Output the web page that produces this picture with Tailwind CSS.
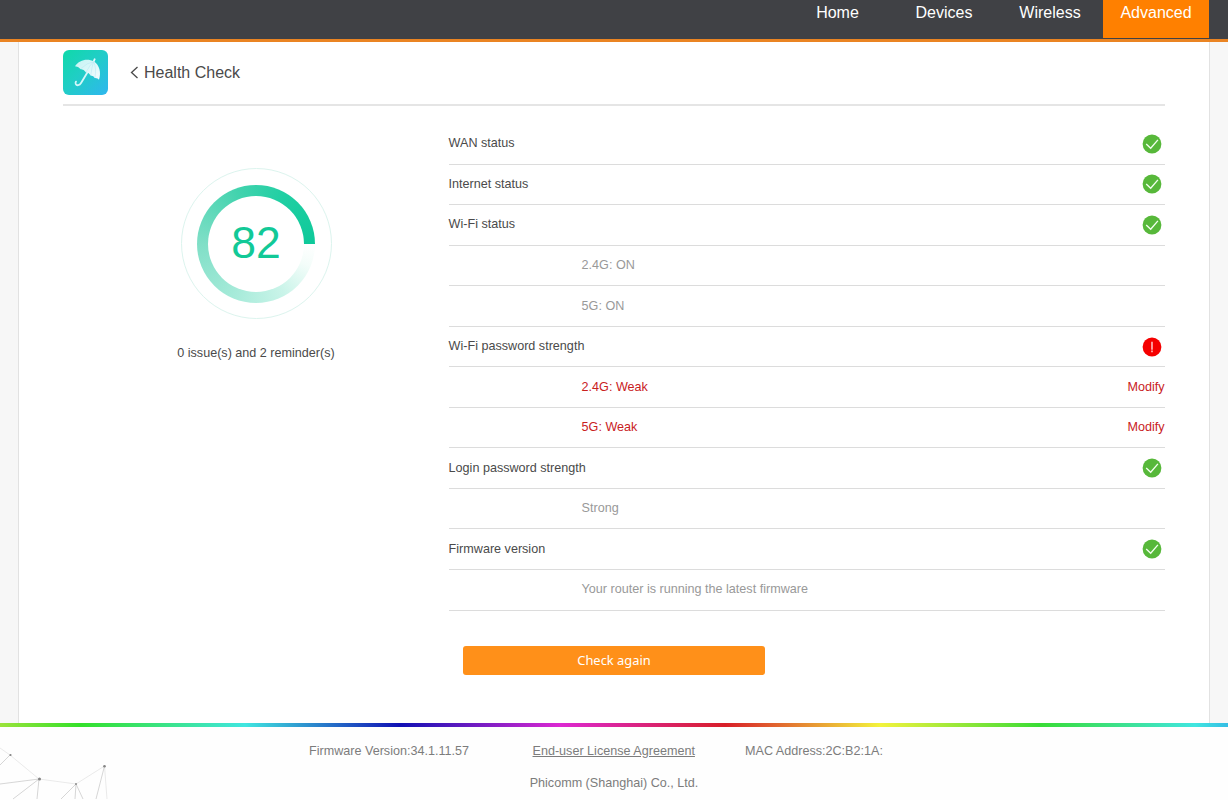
<!DOCTYPE html>
<html lang="en">
<head>
<meta charset="utf-8">
<title>Health Check</title>
<script src="https://cdn.jsdelivr.net/npm/@tailwindcss/browser@4"></script>
</head>
<body class="h-[800px] w-[1228px] overflow-hidden bg-[#f7f7f7] font-['Liberation_Sans',Arial,sans-serif] text-[12.6px] text-[#4a4a4a]">
<svg class="hidden">
  <symbol id="ok" viewBox="0 0 20 20"><circle cx="10" cy="10" r="9.4" fill="#57b83a"/><path d="M4.2 9.900l4.500 4.300 7.200-8.300" fill="none" stroke="#f2ffee" stroke-width="1.35"/></symbol>
</svg>
<div class="flex h-full flex-col">
  <header class="flex h-[42px] shrink-0 justify-end border-b-3 border-[#ea8423] bg-[#404145] pr-[19px] text-base text-white">
    <nav class="flex h-[38px] leading-[26px]">
      <a class="w-[106px] pr-px text-center">Home</a>
      <a class="w-[106px] text-center">Devices</a>
      <a class="w-[106px] text-center">Wireless</a>
      <a class="w-[106px] bg-[#ff8000] text-center">Advanced</a>
    </nav>
  </header>
  <main class="mx-[18px] h-[681px] shrink-0 border-x border-[#e2e2e2] bg-white pt-[7px] pr-[44px] pl-[44px]">
    <div class="flex h-[57px] border-b-2 border-[#e5e5e5]">
      <svg class="mt-[.5px] size-[45px] shrink-0" viewBox="0 0 45 45">
        <defs>
          <linearGradient id="tile" x1="0" y1="0" x2="1" y2="1"><stop offset="0" stop-color="#0fd9a9"/><stop offset=".45" stop-color="#20cec5"/><stop offset="1" stop-color="#2fb6ef"/></linearGradient>
          <linearGradient id="canopy" x1="0" y1="0" x2="1" y2="1"><stop offset="0" stop-color="#c4f3f3"/><stop offset="1" stop-color="#f4fcff"/></linearGradient>
        </defs>
        <rect width="45" height="45" rx="6" fill="url(#tile)"/>
        <path d="M30.700 11.400l1-2.200" stroke="#e3faff" stroke-width="1.8" stroke-linecap="round"/>
        <path d="M25.700 20.300L17.900 33.200C16.800 35.600 13.600 36 12.700 33.800Q12.300 32.600 13 31.600" fill="none" stroke="#d4f7fa" stroke-width="1.800" stroke-linecap="round"/>
        <path d="M12 16.200C16.300 9.600 24.700 8 31 11.600C36.500 15.200 38.400 22.500 36 29.800Q34.800 27.800 31.800 28Q30.800 25.800 27.700 25.500Q26.200 22.800 22.900 22.300Q21.200 19.400 17.500 18.900Q15.300 16.300 12 16.200Z" fill="url(#canopy)"/>
        <path d="M30.600 11.800Q24.300 12.400 17.500 18.900M30.600 11.800Q26.700 15 22.900 22.300M30.600 11.800Q28.800 17 27.700 25.500M30.600 11.800Q33.800 18 31.800 28" fill="none" stroke="#b5e6f3" stroke-width=".5"/>
      </svg>
      <a class="ml-[22px] flex h-[47px] items-center text-base">
        <svg class="mr-[5px] h-[13px] w-[9px]" viewBox="0 0 9 13" fill="none" stroke="#4a4a4a" stroke-width="1.3"><path d="M7.500 1L1.500 6.500l6 5.600"/></svg>Health Check</a>
    </div>
    <div class="flex pt-[18px]">
      <section class="flex w-[386px] shrink-0 flex-col items-center pt-[43.500px]">
        <div class="relative size-[152px]">
          <div class="absolute inset-[.5px] rounded-full border border-[#dcf4ee]"></div>
          <div class="absolute inset-[17px] rounded-full bg-[conic-gradient(from_90deg,#ffffff_0deg,#f4fdfa_22deg,#caf4e9_60deg,#a8ebda_110deg,#80dfc7_180deg,#43d3ae_250deg,#20cfa3_300deg,#0ec99a_360deg)]"></div>
          <div class="absolute inset-[28px] flex items-center justify-center rounded-full bg-white pb-px text-[44.500px] leading-none text-[#12c997]">82</div>
        </div>
        <p class="mt-[23.500px] leading-[20px]">0 issue(s) and 2 reminder(s)</p>
      </section>
      <ul class="-ml-[.4px] grow [&>li]:flex [&>li]:h-[40.55px] [&>li]:items-center [&>li]:justify-between [&>li]:border-b [&>li]:border-[#dcdcdc]">
        <li>WAN status<svg class="mr-[3.500px] size-[20px]"><use href="#ok"/></svg></li>
        <li>Internet status<svg class="mr-[3.500px] size-[20px]"><use href="#ok"/></svg></li>
        <li>Wi-Fi status<svg class="mr-[3.500px] size-[20px]"><use href="#ok"/></svg></li>
        <li class="pl-[133px] text-[#999]">2.4G: ON</li>
        <li class="pl-[133px] text-[#999]">5G: ON</li>
        <li>Wi-Fi password strength<svg class="mr-[3.500px] size-[20px]" viewBox="0 0 20 20"><circle cx="10" cy="10" r="9.4" fill="#f50000"/><path d="M10 4.800v7.900M10 13.600v1.600" stroke="#ffe8e8" stroke-width="1.300"/></svg></li>
        <li class="pl-[133px] text-[#c9211e]"><span>2.4G: Weak</span><a class="mr-[.5px]">Modify</a></li>
        <li class="pl-[133px] text-[#c9211e]"><span>5G: Weak</span><a class="mr-[.5px]">Modify</a></li>
        <li>Login password strength<svg class="mr-[3.500px] size-[20px]"><use href="#ok"/></svg></li>
        <li class="pl-[133px] text-[#999]">Strong</li>
        <li>Firmware version<svg class="mr-[3.500px] size-[20px]"><use href="#ok"/></svg></li>
        <li class="pl-[133px] text-[#999]">Your router is running the latest firmware</li>
      </ul>
    </div>
    <button class="mt-[35.400px] ml-[400px] flex h-[29px] w-[302px] items-center justify-center rounded-[3px] bg-[#ff9019] pt-px font-['Noto_Sans',sans-serif] text-[12.900px] text-white">Check again</button>
  </main>
  <div class="h-[4px] shrink-0 bg-[linear-gradient(90deg,#9be33a_0px,#33e029_80px,#40e6e0_245px,#1010b4_400px,#dc28d2_560px,#d81e28_725px,#f3f33c_880px,#38dc35_1040px,#40e6e0_1195px,#35bde5_1228px)]"></div>
  <footer class="relative grow bg-[#fefefe] text-[#7c7c7c]">
    <svg class="absolute left-0 top-0 h-[73px] w-[120px]" viewBox="0 727 120 73" fill="none">
      <path d="M0 748L10 755L39 779L76 784L104.500 766L107 799" stroke="#e4e4e4" stroke-width=".8"/>
      <path d="M10 755L0 765M39 779L0 784M39 779L13 799M39 779L37 799M76 784L61 799M76 784L75 799M76 784L83 799M104.500 766L96 799" stroke="#c4c4c4" stroke-width=".7"/>
      <g fill="#858585"><circle cx="10.500" cy="755" r="1.100"/><circle cx="39.500" cy="779" r="1.500"/><circle cx="76" cy="784" r=".9"/><circle cx="104.500" cy="766.300" r="1.300"/></g>
    </svg>
    <div class="flex pt-[14px] pl-[309px] leading-[20px]">
      <span class="w-[223.500px]">Firmware Version:34.1.11.57</span>
      <a class="w-[212.500px] underline">End-user License Agreement</a>
      <span>MAC Address:2C:B2:1A:</span>
    </div>
    <p class="pt-[12px] text-center leading-[20px]">Phicomm (Shanghai) Co., Ltd.</p>
  </footer>
</div>
</body>
</html>
